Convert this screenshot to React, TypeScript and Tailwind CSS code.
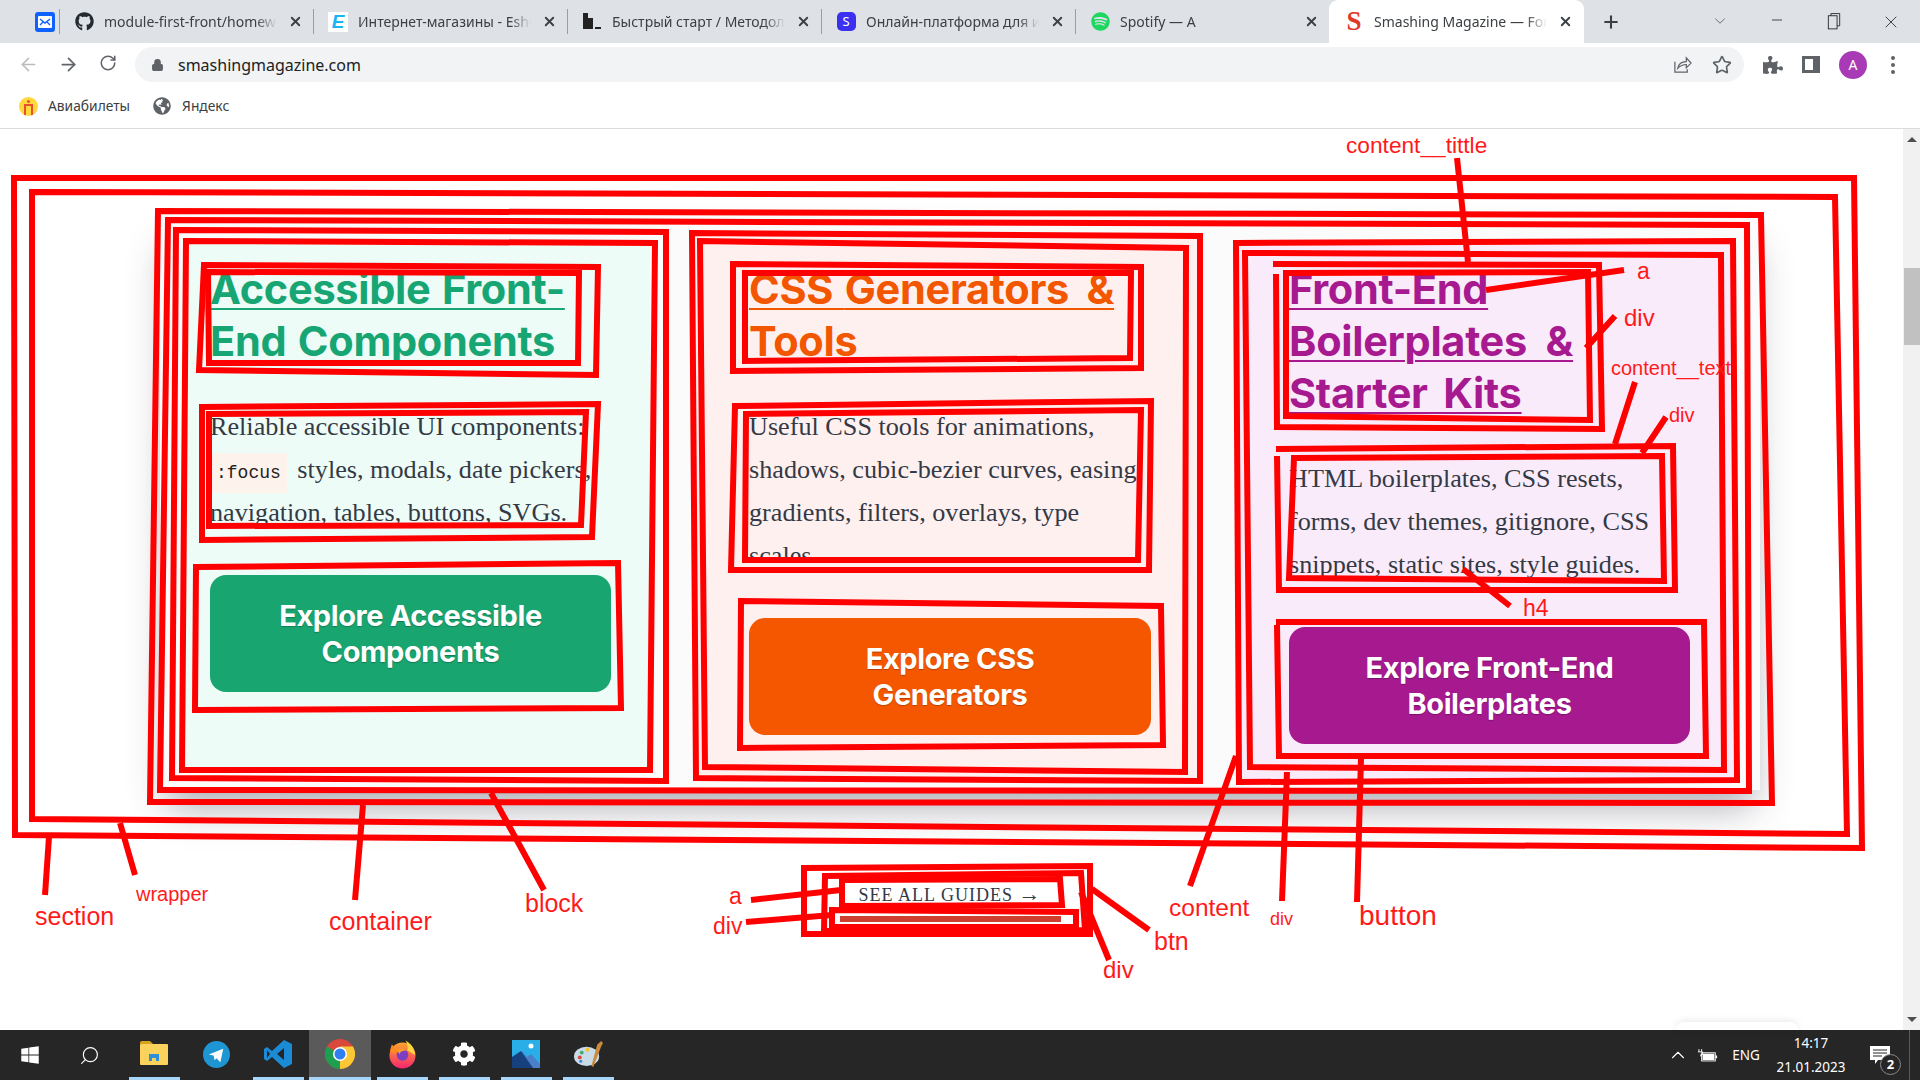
import React from 'react';
import { ArrowLeft, ArrowRight, RotateCw, Lock, Star, X, Plus, ChevronDown, Minus, ChevronUp, Search } from 'lucide-react';
import { FaGithub, FaSpotify, FaWindows, FaPuzzlePiece, FaCog, FaGlobeAmericas } from 'react-icons/fa';

const uiFont = "font-['Noto_Sans',sans-serif]";

/* browser tabs */
const tabs = [
  { title: 'module-first-front/homew', icon: <FaGithub className="w-[19px] h-[19px] text-[#24292f]" /> },
  {
    title: 'Интернет-магазины - Eshop',
    icon: (
      <div className="w-[20px] h-[20px] bg-white flex items-center justify-center font-['Liberation_Sans',sans-serif] italic font-bold text-[19px] leading-none text-[#19b5f1]">
        E
      </div>
    ),
  },
  {
    title: 'Быстрый старт / Методология',
    icon: (
      <svg viewBox="0 0 20 20" className="w-[20px] h-[20px]">
        <path d="M1 1h5v5h5v11H1z" fill="#222" />
        <path d="M13 15h6v2h-6z" fill="#222" />
      </svg>
    ),
  },
  {
    title: 'Онлайн-платформа для изучения',
    icon: (
      <div className="w-[19px] h-[19px] rounded-[5px] bg-[#3b2ff0] flex items-center justify-center text-white text-[13px] leading-none">
        S
      </div>
    ),
  },
  { title: 'Spotify — A', icon: <FaSpotify className="w-[19px] h-[19px] text-[#1ed760]" /> },
];

const Tab: React.FC<{ title: string; icon: React.ReactNode; active?: boolean }> = ({ title, icon, active }) => (
  <div
    className={
      active
        ? 'relative w-[255px] h-[43px] bg-white rounded-t-[9px] flex items-center shrink-0'
        : 'w-[254px] h-[43px] flex items-center shrink-0 relative'
    }
  >
    {!active && <div className="absolute left-0 top-[9px] w-px h-[25px] bg-[#9a9da2]" />}
    <div className="ml-[15px] w-[20px] flex justify-center shrink-0">{icon}</div>
    <div className="ml-[10px] w-[173px] pb-px overflow-hidden whitespace-nowrap text-[14px] text-[#3c4043] [mask-image:linear-gradient(to_right,black_88%,transparent)]">
      {title}
    </div>
    <X className="ml-[11px] w-[15px] h-[15px] text-[#3c4043] shrink-0" strokeWidth={3} />
  </div>
);

function TabStrip() {
  return (
    <div className="h-[43px] bg-[#dee1e6] flex items-center shrink-0">
      <div className="w-[59px] flex justify-end pr-[4px] shrink-0">
        <div className="w-[20px] h-[20px] rounded-[3px] bg-[#0f62fe] flex items-center justify-center">
          <svg viewBox="0 0 16 16" className="w-[16px] h-[16px]">
            <rect x="1" y="2" width="14" height="12" rx="1" fill="#fff" />
            <path d="M3 5l5 4 5-4M3 11l3-3M13 11l-3-3" stroke="#0f62fe" strokeWidth="1.4" fill="none" />
          </svg>
        </div>
      </div>
      {tabs.map((t) => (
        <Tab key={t.title} title={t.title} icon={t.icon} />
      ))}
      <Tab
        active
        title="Smashing Magazine — For Web Designers"
        icon={<span className="font-['Liberation_Serif',serif] font-bold text-[27px] leading-none text-[#dd3a2a]">S</span>}
      />
      <Plus className="ml-[17px] w-[20px] h-[20px] text-[#3c4043] shrink-0" strokeWidth={2.5} />
      <div className="flex-1" />
      <div className="flex mr-px">
        <div className="w-[57px] flex justify-center"><ChevronDown className="w-[18px] h-[18px] text-[#444]" strokeWidth={1} /></div>
        <div className="w-[57px] flex justify-center"><Minus className="w-[16px] h-[16px] text-[#222]" strokeWidth={1.2} /></div>
        <div className="w-[57px] flex justify-center">
          <svg viewBox="0 0 16 20" className="w-[14px] h-[18px] fill-none stroke-[#222]">
            <rect x="1.5" y="4" width="10" height="15" />
            <path d="M4.5 4V1.5h10v14h-3" />
          </svg>
        </div>
        <div className="w-[57px] flex justify-center"><X className="w-[20px] h-[20px] text-[#222]" strokeWidth={1} /></div>
      </div>
    </div>
  );
}

function Toolbar() {
  return (
    <div className="h-[43px] bg-white flex items-center shrink-0">
      <div className="flex pl-[8px]">
        <div className="w-[40px] flex justify-center"><ArrowLeft className="w-[21px] h-[21px] text-[#babcbe]" strokeWidth={1.8} /></div>
        <div className="w-[40px] flex justify-center"><ArrowRight className="w-[21px] h-[21px] text-[#5f6368]" strokeWidth={2} /></div>
        <div className="w-[40px] flex justify-center"><RotateCw className="w-[18px] h-[18px] text-[#5f6368]" strokeWidth={2} /></div>
      </div>
      <div className="ml-[7px] flex-1 h-[35px] rounded-full bg-[#f1f3f4] flex items-center">
        <Lock className="ml-[16px] w-[13px] h-[14px] text-[#5f6368] fill-[#5f6368]" strokeWidth={2} />
        <span className="ml-[14px] text-[16px] text-[#202124]">smashingmagazine.com</span>
        <div className="flex-1" />
        <svg viewBox="0 0 20 20" className="w-[19px] h-[19px] fill-none stroke-[#5f6368] stroke-[1.3]">
          <path d="M2 7v11h13v-3" />
          <path d="M5 14c1-5 5-7 9-7V3l5 5.5-5 5V10c-3 0-6 1-9 4z" />
        </svg>
        <Star className="ml-[20px] mr-[12px] w-[20px] h-[20px] text-[#5f6368]" strokeWidth={2} />
      </div>
      <div className="ml-[9px] mr-[7px] flex items-center">
        <div className="w-[40px] flex justify-center"><FaPuzzlePiece className="w-[20px] h-[20px] text-[#5f6368]" /></div>
        <div className="w-[40px] flex justify-center -ml-[2px] mr-[2px]">
          <div className="w-[18px] h-[17px] border-[3px] border-r-[7px] border-[#5f6368]" />
        </div>
        <div className="w-[40px] flex justify-center">
          <div className="w-[28px] h-[28px] rounded-full bg-[#a83bb5] text-white text-[14px] flex items-center justify-center">A</div>
        </div>
        <div className="w-[40px] flex flex-col items-center gap-[3px]">
          <div className="w-[4px] h-[4px] rounded-full bg-[#5f6368]" />
          <div className="w-[4px] h-[4px] rounded-full bg-[#5f6368]" />
          <div className="w-[4px] h-[4px] rounded-full bg-[#5f6368]" />
        </div>
      </div>
    </div>
  );
}

function Bookmarks() {
  return (
    <div className="h-[43px] bg-white border-b border-[#dadce0] flex items-center pl-[19px] pb-[2px] text-[13.8px] text-[#3c4043] shrink-0">
      <div className="w-[19px] h-[19px] rounded-full bg-[#ffd83d] relative overflow-hidden">
        <div className="absolute left-[5px] top-[7px] w-[9px] h-[12px] border-x-2 border-t-2 border-[#e8502b]" />
        <div className="absolute left-[8px] top-[3px] w-[3px] h-[3px] rounded-full bg-[#e8502b]" />
      </div>
      <span className="ml-[10px]">Авиабилеты</span>
      <FaGlobeAmericas className="ml-[23px] w-[18px] h-[18px] text-[#5f6368]" />
      <span className="ml-[11px]">Яндекс</span>
    </div>
  );
}

/* page content */
const buttonText = "font-['Inter',sans-serif] font-bold text-[29px] leading-[35.5px] text-white text-center tracking-[-0.4px] [text-shadow:0_1px_1px_rgba(0,0,0,0.25)]";
const titleText = "font-['Inter',sans-serif] font-bold text-[41.5px] leading-[52px] tracking-[-0.3px] [word-spacing:2px] underline decoration-[1.5px] underline-offset-[4px]";
const bodyText = "font-['Liberation_Serif',serif] text-[26.2px] leading-[43px] text-[#333a45] whitespace-nowrap";

function Cards() {
  return (
    <div className="ml-[160px] w-[1600px] h-[575px] bg-[#fbfbfc] flex items-start shadow-[0_24px_36px_-8px_rgba(50,50,70,0.42)]">
      <div className="ml-[25px] mt-[27px] w-[465px] h-[528px] bg-[#eefcf7] pl-[25px] pt-[21px]">
        <div className={`${titleText} text-[#17a673]`}>Accessible Front-<br />End Components</div>
        <div className={`mt-[38px] ${bodyText}`}>
          Reliable accessible UI components:<br />
          <code className="font-['Liberation_Mono',monospace] leading-none text-[18px] bg-[#fdf2ec] px-[6px] py-[10px] mr-[4px] text-[#222]">:focus</code> styles, modals, date pickers,<br />
          navigation, tables, buttons, SVGs.
        </div>
        <div className={`mt-[41px] w-[401px] h-[117px] rounded-[16px] bg-[#18a56f] flex items-center justify-center ${buttonText}`}>
          <div>Explore Accessible<br />Components</div>
        </div>
      </div>

      <div className="ml-[46px] mt-[19px] w-[504px] h-[546px] bg-[#fff0f0] pl-[53px] pt-[29px]">
        <div className={`${titleText} text-[#f25700]`}>CSS <span className="[word-spacing:8px]">Generators &amp;</span><br />Tools</div>
        {/* last line is cut in the original too, box keeps the four line height */}
        <div className="mt-[38px] h-[172px]">
          <div className={`${bodyText} h-[153px] overflow-hidden`}>
            Useful CSS tools for animations,<br />
            shadows, cubic-bezier curves, easing<br />
            gradients, filters, overlays, type<br />
            scales.
          </div>
        </div>
        <div className={`mt-[41px] w-[402px] h-[117px] rounded-[16px] bg-[#f55700] flex items-center justify-center ${buttonText}`}>
          <div>Explore CSS<br />Generators</div>
        </div>
      </div>

      <div className="ml-[37px] mt-[25px] w-[496px] h-[540px] bg-[#faebfa] pl-[52px] pt-[23px]">
        <div className={`${titleText} text-[#a6198f]`}>Front-End<br /><span className="[word-spacing:9px]">Boilerplates &amp;</span><br /><span className="[word-spacing:6px]">Starter Kits</span></div>
        <div className={`mt-[38px] ${bodyText}`}>
          HTML boilerplates, CSS resets,<br />
          forms, dev themes, gitignore, CSS<br />
          snippets, static sites, style guides.
        </div>
        <div className={`mt-[41px] w-[401px] h-[117px] rounded-[16px] bg-[#a6198f] flex items-center justify-center ${buttonText}`}>
          <div>Explore Front-End<br />Boilerplates</div>
        </div>
      </div>
    </div>
  );
}

function Page() {
  return (
    <div className="relative flex-1 flex min-h-0">
      <div className="flex-1 bg-white pt-[86px] overflow-hidden">
        <Cards />
        <div className="mt-[92px] flex flex-col items-center">
          <div className="h-[26px] mr-[3px] font-['Liberation_Serif',serif] text-[18px] leading-[26px] tracking-[1px] text-[#333a45] whitespace-nowrap">
            SEE ALL GUIDES <span className="font-['Liberation_Sans',sans-serif] text-[22px] leading-none">→</span>
          </div>
          <div className="mt-[8px] mr-[3px] w-[221px] h-[6px] bg-[#cf3f30]" />
        </div>
      </div>
      <div className="w-[17px] bg-[#f1f1f1] flex flex-col items-center shrink-0">
        <div className="mt-[8px] w-0 h-0 border-x-[5px] border-x-transparent border-b-[5px] border-b-[#505050]" />
        <div className="mt-[126px] w-[16px] h-[77px] bg-[#c1c1c1]" />
        <div className="flex-1" />
        <div className="mb-[8px] w-0 h-0 border-x-[5px] border-x-transparent border-t-[5px] border-t-[#505050]" />
      </div>
      {/* bit of a popup peeking over the taskbar */}
      <div className="absolute left-[1676px] bottom-0 w-[122px] h-[8px] rounded-t-[10px] bg-white shadow-[0_0_8px_rgba(0,0,0,0.12)]" />
    </div>
  );
}

/* taskbar */
const FolderIcon = () => (
  <svg viewBox="0 0 28 26" className="w-[28px] h-[26px]">
    <path d="M0 2a2 2 0 012-2h8l3 3h-13z" fill="#d9a21b" />
    <rect y="3" width="28" height="21" rx="1" fill="#fbd35c" />
    <path d="M9 20v-7h10v7h-3v-3h-4v3z" fill="#2e8fd8" />
  </svg>
);
const TelegramIcon = () => (
  <svg viewBox="0 0 28 28" className="w-[27px] h-[27px]">
    <circle cx="14" cy="14" r="14" fill="#1e96d4" />
    <path d="M6 14l15-6-3 14-4-4-2 2-1-5z" fill="#fff" />
  </svg>
);
const VscodeIcon = () => (
  <svg viewBox="0 0 30 30" className="w-[30px] h-[30px]">
    <path d="M21 1l8 4v20l-8 4-12-11-5 4-3-2v-10l3-2 5 4z" fill="#1b8bd6" />
    <path d="M21 9l-7 6 7 6z" fill="#252525" />
    <path d="M4 11l3 4-3 4z" fill="#252525" />
  </svg>
);
const ChromeIcon = () => (
  <svg viewBox="0 0 30 30" className="w-[30px] h-[30px]">
    <circle cx="15" cy="15" r="15" fill="#d9483b" />
    <path d="M15 15L2 7.5A15 15 0 0015 30z" fill="#1e9e50" />
    <path d="M15 15l13-7.5H15zM15 15v15a15 15 0 0013-22.5z" fill="#fcc934" />
    <circle cx="15" cy="15" r="7" fill="#fff" />
    <circle cx="15" cy="15" r="5.5" fill="#2f7ff0" />
  </svg>
);
const FirefoxIcon = () => (
  <svg viewBox="0 0 30 30" className="w-[29px] h-[30px]">
    <defs>
      <linearGradient id="ff" x1="0" y1="0" x2="0" y2="1">
        <stop offset="0" stopColor="#ffa62b" />
        <stop offset="1" stopColor="#f5266f" />
      </linearGradient>
    </defs>
    <circle cx="15" cy="16.5" r="13.5" fill="url(#ff)" />
    <path d="M18 1c6 3 10 9 10 15l-8-5c1-3 0-7-2-10z" fill="#ffd53d" />
    <path d="M2 12l2-7 3 4 5 1-6 5z" fill="#ff8a1f" />
    <circle cx="15" cy="16" r="6" fill="#7b3fc4" />
    <path d="M9 11c3-2 8-2 10 1-3-1-6 0-7 3z" fill="#ff9a2e" />
  </svg>
);
const PhotosIcon = () => (
  <svg viewBox="0 0 28 28" className="w-[28px] h-[28px]">
    <rect width="28" height="28" fill="#2aaee8" />
    <circle cx="19" cy="6" r="2.5" fill="#fff" />
    <path d="M0 24l10-13 5 6 4-3 9 10v4H0z" fill="#4a7fc9" />
    <path d="M0 28v-11l9-6 12 17z" fill="#17407f" />
  </svg>
);
const PaintIcon = () => (
  <svg viewBox="0 0 32 30" className="w-[31px] h-[29px]">
    <ellipse cx="14" cy="17" rx="13" ry="10" fill="#c9dbe6" />
    <circle cx="7" cy="18" r="2" fill="#d9483b" />
    <circle cx="9" cy="13" r="2" fill="#46a86a" />
    <circle cx="15" cy="10" r="2" fill="#f1c232" />
    <circle cx="8" cy="22" r="1.6" fill="#3f88d8" />
    <path d="M29 1l2 2-2 4-8 21-2-1 6-22z" fill="#c98a3c" />
  </svg>
);

const apps: { icon: React.ReactNode; open?: boolean; active?: boolean }[] = [
  { icon: <FolderIcon />, open: true },
  { icon: <TelegramIcon /> },
  { icon: <VscodeIcon />, open: true },
  { icon: <ChromeIcon />, open: true, active: true },
  { icon: <FirefoxIcon />, open: true },
  { icon: <FaCog className="w-[24px] h-[24px] text-white" />, open: true },
  { icon: <PhotosIcon />, open: true },
  { icon: <PaintIcon />, open: true },
];

function Taskbar() {
  return (
    <div className="h-[50px] bg-[#262626] flex items-stretch text-white shrink-0">
      <div className="w-[60px] flex items-center justify-center"><FaWindows className="w-[20px] h-[20px]" /></div>
      <div className="w-[58px] flex items-center justify-center"><Search className="w-[21px] h-[21px] -scale-x-100" strokeWidth={1.3} /></div>
      <div className="ml-[5px] flex">
        {apps.map((a, i) => (
          <div key={i} className={`w-[62px] relative flex items-center justify-center pb-[2px] ${a.active ? 'bg-[#5a5a5a]' : ''}`}>
            {a.icon}
            {a.open && (
              <div className={`absolute bottom-0 h-[3px] bg-[#a6d6fb] ${a.active ? 'left-0 right-0' : 'left-[6px] right-[5px]'}`} />
            )}
          </div>
        ))}
      </div>
      <div className="flex-1" />
      <div className="w-[30px] flex items-center justify-center"><ChevronUp className="w-[22px] h-[22px]" strokeWidth={1.2} /></div>
      <div className="w-[30px] flex items-center justify-center">
        <svg viewBox="0 0 22 14" className="w-[20px] h-[13px]">
          <path d="M1 0v3M4 0v3M0 3h5v3H3v2" stroke="#fff" fill="none" />
          <rect x="4" y="4" width="15" height="9" fill="none" stroke="#fff" />
          <rect x="5" y="5" width="13" height="7" fill="#fff" />
          <rect x="19.5" y="7" width="1.5" height="3" fill="#fff" />
        </svg>
      </div>
      <div className="w-[46px] flex items-center justify-center text-[13.5px]">ENG</div>
      <div className="w-[84px] flex flex-col items-center justify-center text-[13.5px] leading-[24px]">
        <div>14:17</div>
        <div>21.01.2023</div>
      </div>
      <div className="w-[54px] relative flex items-center justify-center">
        <svg viewBox="0 0 20 18" className="w-[20px] h-[18px]">
          <path d="M0 0h20v14H8l-3 4v-4H0z" fill="#fff" />
          <path d="M3 4h14M3 7h14M3 10h9" stroke="#262626" />
        </svg>
        <div className="absolute left-[27px] top-[24px] w-[21px] h-[21px] rounded-full bg-[#262626] border border-[#8a8a8a] flex items-center justify-center text-[13px] font-bold leading-none">2</div>
      </div>
      <div className="w-[13px] relative"><div className="absolute left-[2px] top-0 bottom-0 w-px bg-[#5a5a5a]" /></div>
    </div>
  );
}

/* hand drawn markup over the page, full screen coordinates */
const boxes = [
  '14,178 1854,178 1862,848 15,835',
  '32,192 1835,197 1847,834 32,819',
  '158,211 1761,215 1772,803 150,802',
  '168,220 1747,225 1749,791 160,790',
  '176,230 666,232 666,781 172,778',
  '186,241 655,243 650,770 182,770',
  '204,265 598,267 596,375 199,370',
  '208,272 579,273 578,363 209,363',
  '202,407 598,404 592,537 202,540',
  '209,414 586,412 581,525 209,526',
  '196,567 618,563 621,708 195,710',
  '692,233 1200,236 1200,781 696,778',
  '700,241 1186,248 1185,772 705,767',
  '733,264 1141,267 1141,368 733,371',
  '745,273 1131,273 1130,358 745,361',
  '735,406 1151,401 1149,570 731,570',
  '746,414 1141,410 1138,560 745,560',
  '741,601 1161,606 1163,745 740,748',
  '1236,243 1733,241 1737,780 1239,782',
  '1245,253 1721,255 1724,770 1250,767',
  '1286,273 1588,272 1590,420 1286,416',
  '1294,458 1662,456 1664,581 1289,578',
  '804,868 1090,866 1090,934 804,934',
  '825,876 1081,873 1085,930 824,931',
  '842,880 1060,879 1062,905 842,906',
  '832,910 1076,912 1076,927 832,927',
];

const strokes = [
  '1273,264 1599,265 1602,429 1277,427 1276,274',
  '1276,449 1673,446 1675,590 1279,590 1277,456',
  '1276,622 1704,622 1706,756 1279,756 1277,625',
  '49,837 45,895',
  '120,823 135,875',
  '363,805 355,900',
  '491,793 544,890',
  '1236,756 1190,886',
  '1287,772 1282,901',
  '1361,758 1357,902',
  '751,900 841,890',
  '746,922 832,915',
  '1092,889 1149,930',
  '1081,892 1109,960',
  '1457,158 1468,262',
  '1486,290 1624,270',
  '1586,348 1615,316',
  '1635,382 1615,444',
  '1666,417 1642,453',
  '1463,569 1510,606',
];

const labels = [
  { text: 'content__tittle', className: 'left-[1346px] top-[145px] text-[22.7px]' },
  { text: 'a', className: 'left-[1637px] top-[271px] text-[23px]' },
  { text: 'div', className: 'left-[1624px] top-[318px] text-[24px]' },
  { text: 'content__text', className: 'left-[1611px] top-[368px] text-[20px]' },
  { text: 'div', className: 'left-[1669px] top-[415px] text-[20px]' },
  { text: 'h4', className: 'left-[1523px] top-[608px] text-[23px]' },
  { text: 'section', className: 'left-[35px] top-[916px] text-[25px]' },
  { text: 'wrapper', className: 'left-[136px] top-[894px] text-[20px]' },
  { text: 'container', className: 'left-[329px] top-[921px] text-[25px]' },
  { text: 'block', className: 'left-[525px] top-[903px] text-[25px]' },
  { text: 'a', className: 'left-[729px] top-[896px] text-[23px]' },
  { text: 'div', className: 'left-[713px] top-[926px] text-[23px]' },
  { text: 'content', className: 'left-[1169px] top-[908px] text-[24.5px]' },
  { text: 'div', className: 'left-[1270px] top-[919px] text-[18px]' },
  { text: 'button', className: 'left-[1359px] top-[916px] text-[28px]' },
  { text: 'btn', className: 'left-[1154px] top-[941px] text-[25px]' },
  { text: 'div', className: 'left-[1103px] top-[970px] text-[24px]' },
];

function Markup() {
  return (
    <>
      <svg viewBox="0 0 1920 1080" className="absolute inset-0 w-full h-full pointer-events-none fill-none stroke-[#ff0000] stroke-[6]">
        {boxes.map((p) => (
          <polygon key={p} points={p} />
        ))}
        {strokes.map((p) => (
          <polyline key={p} points={p} />
        ))}
      </svg>
      {labels.map((l) => (
        <span
          key={l.className}
          className={`absolute -translate-y-1/2 leading-none whitespace-nowrap text-[#ff1a1a] font-['Liberation_Sans',sans-serif] ${l.className}`}
        >
          {l.text}
        </span>
      ))}
    </>
  );
}

export default function App() {
  return (
    <div className={`relative w-[1920px] h-[1080px] overflow-hidden flex flex-col bg-white ${uiFont}`}>
      <TabStrip />
      <Toolbar />
      <Bookmarks />
      <Page />
      <Taskbar />
      <Markup />
    </div>
  );
}
